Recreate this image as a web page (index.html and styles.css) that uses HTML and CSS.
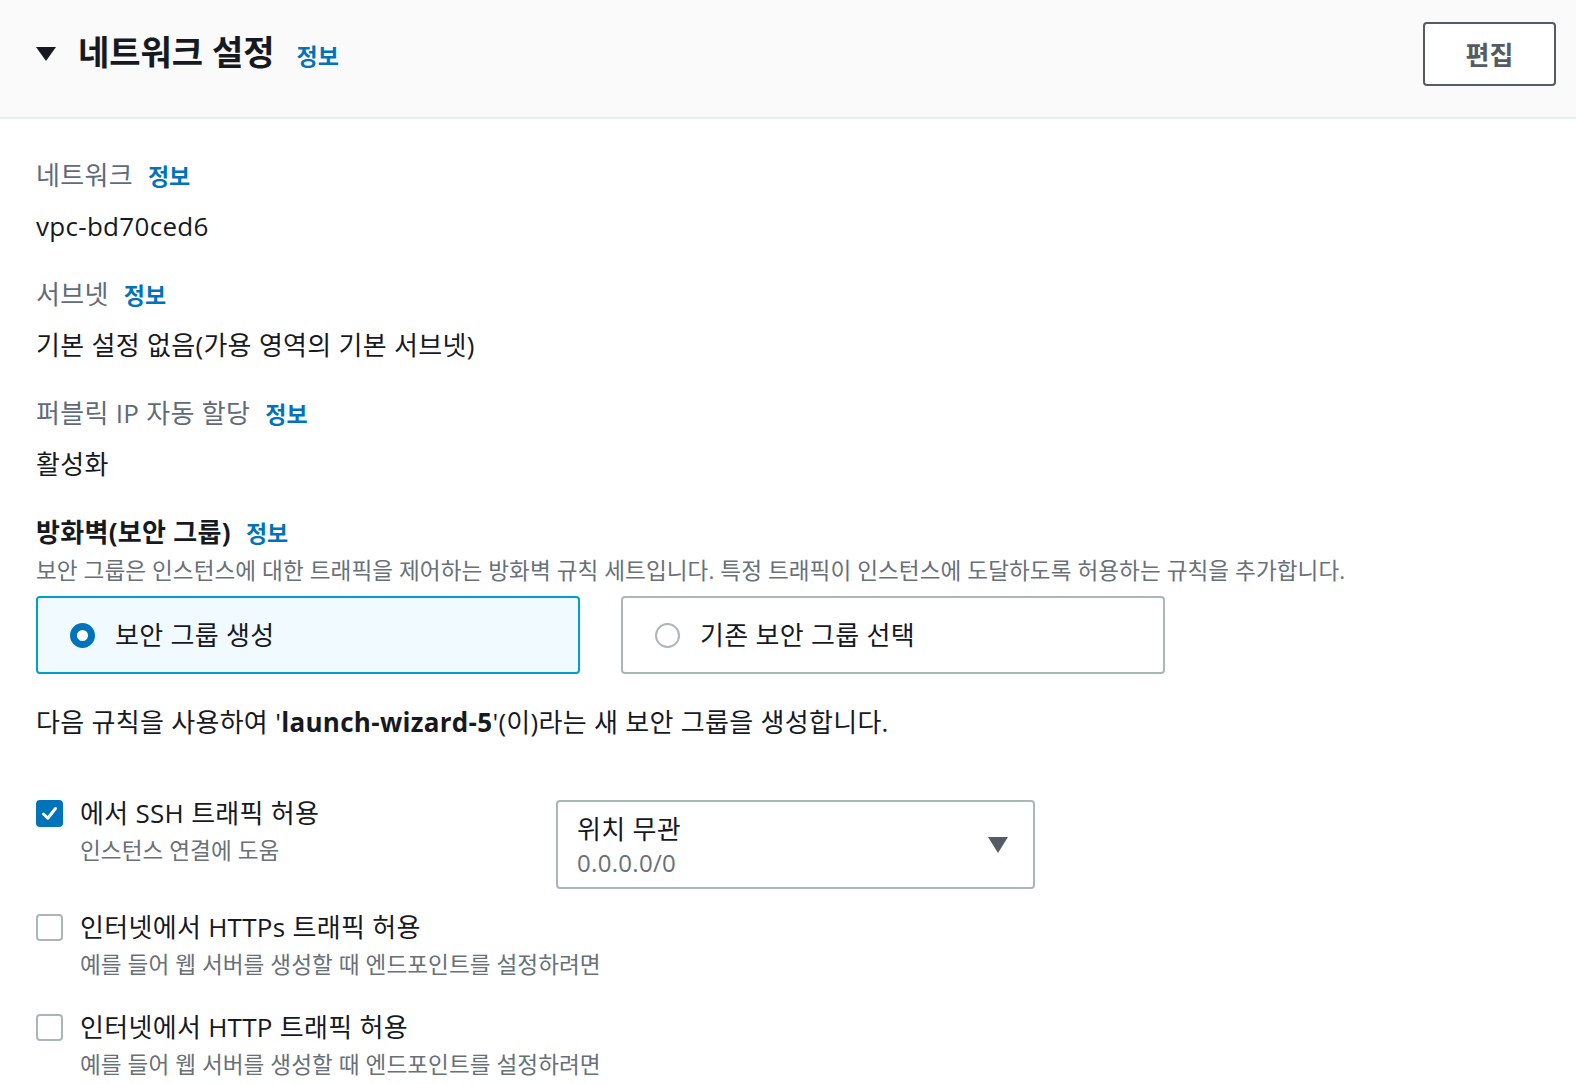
FILE: index.html
```html
<!DOCTYPE html>
<html lang="ko">
<head>
    <meta charset="UTF-8">
    <meta name="viewport" content="width=device-width, initial-scale=1.0">
    <title>네트워크 설정</title>
    <link rel="stylesheet" href="styles.css">
</head>
<body>
    <div class="panel">
        <div class="panel-header">
            <h2 class="panel-title">
                <span class="caret"></span>
                네트워크 설정
                <a class="info info-lg" href="#">정보</a>
            </h2>
            <button class="btn-edit">편집</button>
        </div>

        <div class="panel-body">
            <div class="field">
                <div class="field-label">네트워크 <a class="info" href="#">정보</a></div>
                <div class="field-value">vpc-bd70ced6</div>
            </div>
            <div class="field">
                <div class="field-label">서브넷 <a class="info" href="#">정보</a></div>
                <div class="field-value">기본 설정 없음(가용 영역의 기본 서브넷)</div>
            </div>
            <div class="field">
                <div class="field-label">퍼블릭 IP 자동 할당 <a class="info" href="#">정보</a></div>
                <div class="field-value">활성화</div>
            </div>

            <div class="firewall">
                <div class="section-label">방화벽(보안 그룹) <a class="info" href="#">정보</a></div>
                <div class="section-desc">보안 그룹은 인스턴스에 대한 트래픽을 제어하는 방화벽 규칙 세트입니다. 특정 트래픽이 인스턴스에 도달하도록 허용하는 규칙을 추가합니다.</div>
                <div class="tiles">
                    <label class="tile selected">
                        <span class="radio checked"></span>
                        보안 그룹 생성
                    </label>
                    <label class="tile">
                        <span class="radio"></span>
                        기존 보안 그룹 선택
                    </label>
                </div>
            </div>

            <p class="note">다음 규칙을 사용하여 '<b>launch-wizard-5</b>'(이)라는 새 보안 그룹을 생성합니다.</p>

            <div class="rule rule-ssh">
                <div class="check">
                    <span class="box checked">
                        <svg width="19" height="19" viewBox="0 0 19 19"><path d="M3.5 10 L7.8 14.2 L15.5 4.5" fill="none" stroke="#fff" stroke-width="3" stroke-linecap="round" stroke-linejoin="round"/></svg>
                    </span>
                    <div>
                        <div class="check-title">에서 SSH 트래픽 허용</div>
                        <div class="check-desc">인스턴스 연결에 도움</div>
                    </div>
                </div>
                <div class="select">
                    <div>
                        <div class="select-title">위치 무관</div>
                        <div class="select-sub">0.0.0.0/0</div>
                    </div>
                    <span class="select-arrow"></span>
                </div>
            </div>

            <div class="rule">
                <div class="check">
                    <span class="box"></span>
                    <div>
                        <div class="check-title">인터넷에서 HTTPs 트래픽 허용</div>
                        <div class="check-desc">예를 들어 웹 서버를 생성할 때 엔드포인트를 설정하려면</div>
                    </div>
                </div>
            </div>

            <div class="rule">
                <div class="check">
                    <span class="box"></span>
                    <div>
                        <div class="check-title">인터넷에서 HTTP 트래픽 허용</div>
                        <div class="check-desc">예를 들어 웹 서버를 생성할 때 엔드포인트를 설정하려면</div>
                    </div>
                </div>
            </div>
        </div>
    </div>
</body>
</html>
```

FILE: styles.css
```css
body {
    margin: 0;
    background-color: #fff;
    color: #16191f;
    font-family: "Open Sans", "Noto Sans CJK KR", sans-serif;
    font-size: 26px;
    line-height: 32px;
    letter-spacing: 0.3px;
}
.panel-header {
    display: flex;
    align-items: center;
    justify-content: space-between;
    height: 119px;
    box-sizing: border-box;
    padding: 0 20px 10px 36px;
    background-color: #fafafa;
    border-bottom: 2px solid #eaeded;
}
.panel-title {
    display: flex;
    align-items: baseline;
    margin: 0;
    font-size: 34px;
    line-height: 44px;
    font-weight: 700;
    letter-spacing: 0;
}
.caret {
    width: 0;
    height: 0;
    border-left: 10px solid transparent;
    border-right: 10px solid transparent;
    border-top: 14px solid #16191f;
    margin-right: 22px;
    align-self: center;
}
.info {
    color: #0073bb;
    font-weight: 700;
    font-size: 23px;
    letter-spacing: 0;
    text-decoration: none;
    margin-left: 8px;
}
.info-lg {
    margin-left: 22px;
}
.btn-edit {
    width: 133px;
    height: 64px;
    border: 2px solid #545b64;
    border-radius: 4px;
    background-color: #fff;
    color: #545b64;
    font-family: inherit;
    font-size: 26px;
    font-weight: 700;
}
.panel-body {
    padding: 40px 36px 0 36px;
}
.field {
    margin-bottom: 36px;
}
.field-label {
    color: #5f6b7a;
}
.field-value {
    margin-top: 18px;
}
.firewall {
    margin-top: 4px;
}
.section-label {
    font-weight: 700;
}
.section-desc {
    margin-top: 8px;
    color: #687078;
    font-size: 22.6px;
    line-height: 28px;
    letter-spacing: 0.05px;
}
.tiles {
    display: flex;
    gap: 41px;
    margin-top: 11px;
}
.tile {
    display: flex;
    align-items: center;
    gap: 20px;
    width: 544px;
    height: 78px;
    box-sizing: border-box;
    padding-left: 32px;
    border: 2px solid #aab7b8;
    border-radius: 4px;
    background-color: #fff;
}
.tile.selected {
    border-color: #00a1c9;
    background-color: #f1faff;
}
.radio {
    width: 25px;
    height: 25px;
    box-sizing: border-box;
    border: 2px solid #aab7b8;
    border-radius: 50%;
    background-color: #fff;
}
.radio.checked {
    border: 7px solid #0073bb;
}
.note {
    margin: 32px 0 0 0;
}
.note b {
    font-weight: 700;
}
.rule {
    display: flex;
    align-items: flex-start;
    margin-top: 32px;
}
.rule-ssh {
    margin-top: 59px;
    margin-bottom: -10px;
}
.check {
    display: flex;
    align-items: flex-start;
    gap: 17px;
}
.rule-ssh .check {
    width: 520px;
}
.box {
    display: flex;
    align-items: center;
    justify-content: center;
    flex-shrink: 0;
    width: 27px;
    height: 27px;
    margin-top: 3px;
    box-sizing: border-box;
    border: 2px solid #aab7b8;
    border-radius: 4px;
    background-color: #fff;
}
.box.checked {
    border-color: #0073bb;
    background-color: #0073bb;
}
.check-desc {
    margin-top: 8px;
    color: #687078;
    font-size: 22.6px;
    line-height: 28px;
    letter-spacing: 0.05px;
}
.select {
    display: flex;
    align-items: center;
    justify-content: space-between;
    width: 479px;
    height: 89px;
    margin-top: 3px;
    box-sizing: border-box;
    padding: 0 25px 0 19px;
    border: 2px solid #aab7b8;
    border-radius: 4px;
}
.select-title {
    line-height: 32px;
}
.select-sub {
    margin-top: 4px;
    color: #687078;
    font-size: 24px;
    line-height: 28px;
}
.select-arrow {
    width: 0;
    height: 0;
    border-left: 10px solid transparent;
    border-right: 10px solid transparent;
    border-top: 16px solid #545b64;
}
```
